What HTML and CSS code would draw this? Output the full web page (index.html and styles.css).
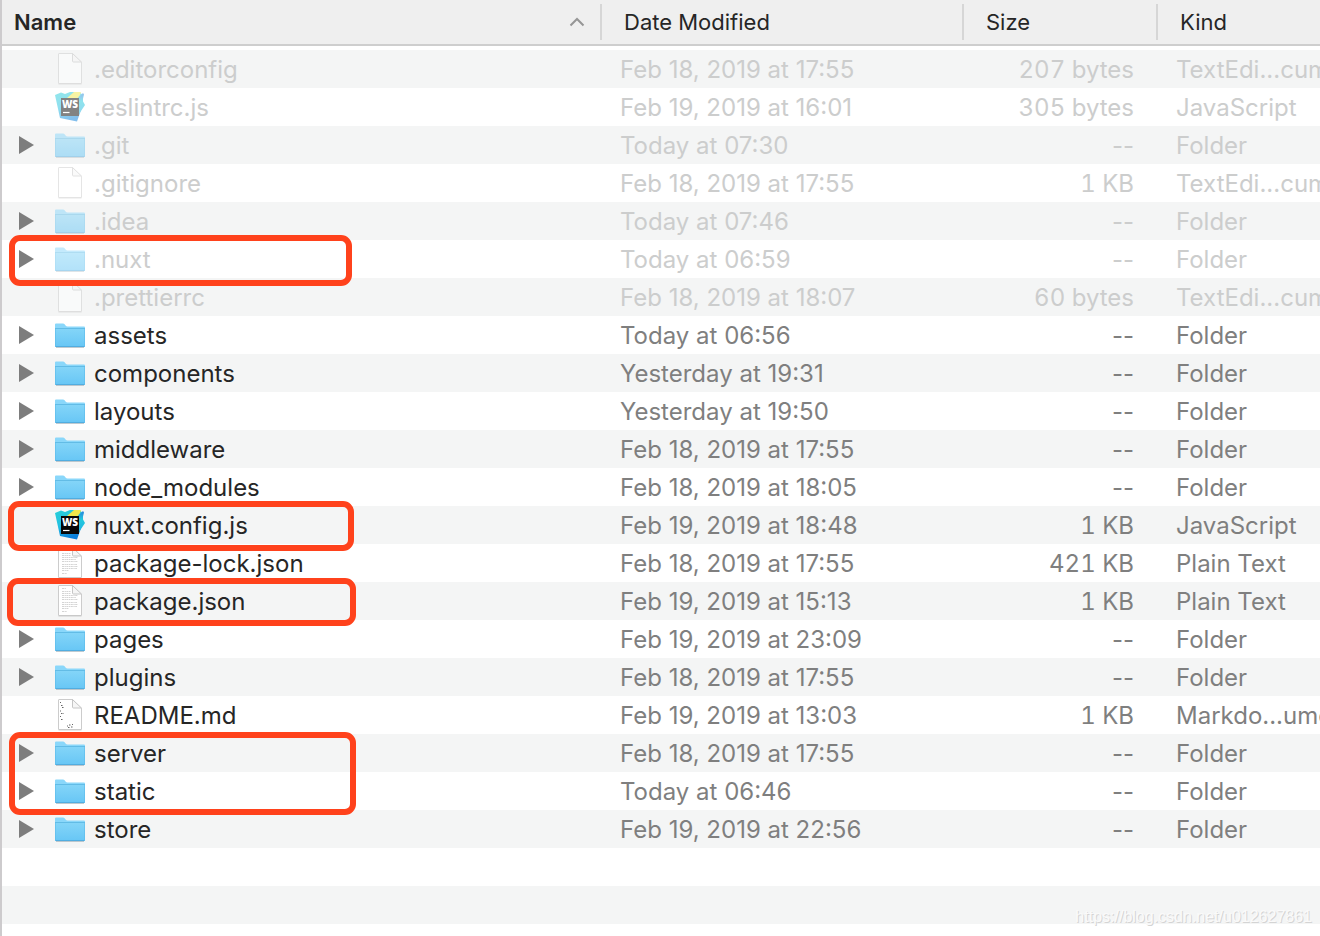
FILE: index.html
```
<!DOCTYPE html>
<html lang="en">
<head>
<meta charset="utf-8">
<title>Files</title>
<link rel="stylesheet" href="styles.css">
<script src="files.js" defer></script>
</head>
<body>
<svg class="defs" aria-hidden="true">
  <defs>
    <linearGradient id="folder-fill" x1="0" y1="0" x2="0" y2="1">
      <stop offset="0" stop-color="#84d5f8"/><stop offset="1" stop-color="#67c6f5"/>
    </linearGradient>
    <linearGradient id="ws-fill" x1="0" y1="0" x2="0.3" y2="1">
      <stop offset="0" stop-color="#27cfd8"/><stop offset="0.55" stop-color="#22c0e2"/><stop offset="1" stop-color="#0a80dc"/>
    </linearGradient>
    <linearGradient id="ws-side" x1="0" y1="0" x2="0" y2="1">
      <stop offset="0" stop-color="#2a7fdc"/><stop offset="0.4" stop-color="#22c8dc"/><stop offset="1" stop-color="#22b4e4"/>
    </linearGradient>
  </defs>
  <symbol id="folder" viewBox="0 0 30 38">
    <path d="M1 31.5h28" stroke="#a4b4bc" stroke-opacity=".7"/>
    <path d="M0 30V8.500Q0 7.500 1 7.500h7q1 0 1.600.8l1.200 1.400q.6.800 1.600.8H29q1 0 1 1V30q0 1-1 1H1q-1 0-1-1z" fill="#8ad7fa"/>
    <path d="M0 12.500h30V30q0 1-1 1H1q-1 0-1-1z" fill="url(#folder-fill)"/>
    <path d="M0 12.500h30" stroke="#62bce6"/>
    <path d="M.5 30.500h29" stroke="#51ade0"/>
    <path d="M.5 12v18M29.500 12v18" stroke="#5dbbe9" stroke-width=".6"/>
  </symbol>
  <symbol id="doc" viewBox="0 0 30 38">
    <path d="M3.500 33.800h23" stroke="#b4b4b4"/>
    <path d="M3.500 4q0-.5.5-.5h13.500l9 9V33q0 .5-.5.500H4q-.5 0-.5-.5z" fill="#fff" stroke="#c6c6c6" stroke-width=".9"/>
    <path d="M17.500 3.500v7.500q0 1 1 1h8z" fill="#f6f6f6" stroke="#c0c0c0" stroke-width=".9"/>
  </symbol>
  <symbol id="text" viewBox="0 0 30 38">
    <use href="#doc"/>
    <path d="M7 6.500h4M7 9.500h9M7 11.500h9M7 13.500h16M7 15.500h14M7 17.500h16M7 20.500h15M7 22.500h16M7 24.500h15M7 26.500h7M7 29.500h5" stroke="#999" stroke-width=".7" stroke-dasharray="2 .6 1.300 .5" opacity=".6"/>
  </symbol>
  <symbol id="markdown" viewBox="0 0 30 38">
    <use href="#doc"/>
    <path d="M5 6.500h1.500M6 9.500h2M7 11.500h2M5 15h1.500M6 17.500h2.500M5 20.500h1.500M6 23.500h2M12 30h1M14 29h2M17 28.500h1M13 31.500h2M16 31h2" stroke="#666" stroke-width="1.100" stroke-dasharray="1 .5"/>
  </symbol>
  <symbol id="webstorm" viewBox="0 0 30 38">
    <path d="M0 7 6 4.500l4 1.500 5-2h9l4 3v10l-3 8-3 8.500L5 30z" fill="url(#ws-fill)"/>
    <path d="M23 10l5-5 1 1.500-1.500 6L30 17l-4 6-2 3z" fill="url(#ws-side)"/>
    <path d="M12 10l7-6h7l-1 3-3 4z" fill="#f0e84a"/>
    <rect x="6" y="10" width="18" height="18" fill="#080808"/>
    <text class="ws-label" x="15" y="20" text-anchor="middle">WS</text>
    <path d="M8 24.500h6.500" stroke="#fff" stroke-width="1.200"/>
  </symbol>
</svg>
<main class="finder">
  <table class="files">
    <colgroup><col><col class="col-date"><col class="col-size"><col class="col-kind"></colgroup>
    <thead>
      <tr>
        <th scope="col" aria-sort="ascending"><button type="button" class="head head-name">Name
          <svg class="sort" viewBox="0 0 16 10" aria-hidden="true"><path d="M1.500 8.500 8 2l6.500 6.500"/></svg></button></th>
        <th scope="col"><button type="button" class="head">Date Modified</button></th>
        <th scope="col"><button type="button" class="head">Size</button></th>
        <th scope="col"><button type="button" class="head">Kind</button></th>
      </tr>
    </thead>
    <tbody id="rows"></tbody>
  </table>
  <p class="watermark">https://blog.csdn.net/u012627861</p>
</main>
</body>
</html>
```
FILE: styles.css
```
* {
  box-sizing: border-box;
}

body {
  margin: 0;
  background: #fff;
  color: #262626;
  font-family: Inter, "Liberation Sans", sans-serif;
}

.defs {
  position: absolute;
  width: 0;
  height: 0;
  visibility: hidden;
}

.finder {
  position: relative;
  min-height: 100vh;
  border-left: 2px solid #cdcbcd;
  overflow: hidden;
}

.files {
  width: 100%;
  table-layout: fixed;
  border-collapse: separate;
  border-spacing: 0;
}

.col-date { width: 362px; }
.col-size { width: 194px; }
.col-kind { width: 164px; }

th {
  height: 46px;
  padding: 1px 0;
  background: #efefef;
  border-bottom: 2px solid #cecece;
}

.head {
  display: flex;
  align-items: center;
  width: 100%;
  height: 36px;
  padding: 0 0 0 22px;
  border: 0;
  border-left: 2px solid #d6d6d6;
  background: none;
  color: inherit;
  font: 400 22px/36px Inter, "Liberation Sans", sans-serif;
  text-align: left;
}

.head-name {
  justify-content: space-between;
  padding: 0 15px 0 12px;
  border-left: 0;
  font-weight: 600;
}

.sort {
  width: 16px;
  height: 10px;
  fill: none;
  stroke: #969696;
  stroke-width: 2;
}

tbody::before {
  content: "";
  display: table-row;
  height: 4px;
}

td {
  height: 38px;
  padding: 2px 0 0;
  color: #7f7f7f;
  font-size: 24px;
  line-height: 36px;
  white-space: nowrap;
}

.stripe td {
  background: #f4f5f5;
}

.name {
  position: relative;
  padding: 0;
  color: #262626;
}

.date,
.kind {
  padding-left: 20px;
}

.kind {
  overflow: hidden;
}

.size {
  padding-right: 22px;
  text-align: right;
}

.amount {
  font-variant-numeric: tabular-nums;
}

.hidden-file td {
  color: #cccdcd;
}

.hidden-file .icon {
  opacity: 0.5;
}

.entry {
  display: grid;
  grid-template-columns: 27px 30px 1fr;
  column-gap: 9px;
  padding-left: 17px;
}

.toggle {
  grid-column: 1;
  width: 16px;
  height: 38px;
  padding: 0;
  border: 0;
  background: none;
}

.toggle svg {
  display: block;
  width: 16px;
  height: 38px;
  fill: #7d7d7d;
}

.icon {
  grid-column: 2;
  width: 30px;
  height: 38px;
}

.label {
  padding-top: 2px;
}

.ws-label {
  fill: #fff;
  font: 800 10px "Open Sans", sans-serif;
}

.mark {
  position: absolute;
  z-index: 1;
  border: 6px solid #ff421c;
  border-radius: 11px;
  pointer-events: none;
}

.mark-nuxt { inset: -5px auto -8px 7px; width: 343px; }
.mark-config { inset: -5px auto -7px 6px; width: 346px; }
.mark-package { inset: -4px auto -6px 5px; width: 349px; }
.mark-server { inset: -2px auto -43px 7px; width: 347px; }

.watermark {
  position: absolute;
  right: 8px;
  bottom: 9px;
  margin: 0;
  color: #fafafa;
  font: 16px/20px "Liberation Sans", Arial, sans-serif;
  text-shadow: 1px 1px 0 #d4d4d4;
}
```
FILE: files.js
```
const T = 'TextEdi...cument';
const files = [
  ['.editorconfig', 'doc', 'Feb 18, 2019 at 17:55', '207 bytes', T],
  ['.eslintrc.js', 'webstorm', 'Feb 19, 2019 at 16:01', '305 bytes', 'JavaScript'],
  ['.git', 'folder', 'Today at 07:30'],
  ['.gitignore', 'doc', 'Feb 18, 2019 at 17:55', '1 KB', T],
  ['.idea', 'folder', 'Today at 07:46'],
  ['.nuxt', 'folder', 'Today at 06:59', '--', 'Folder', 'nuxt'],
  ['.prettierrc', 'doc', 'Feb 18, 2019 at 18:07', '60 bytes', T],
  ['assets', 'folder', 'Today at 06:56'],
  ['components', 'folder', 'Yesterday at 19:31'],
  ['layouts', 'folder', 'Yesterday at 19:50'],
  ['middleware', 'folder', 'Feb 18, 2019 at 17:55'],
  ['node_modules', 'folder', 'Feb 18, 2019 at 18:05'],
  ['nuxt.config.js', 'webstorm', 'Feb 19, 2019 at 18:48', '1 KB', 'JavaScript', 'config'],
  ['package-lock.json', 'text', 'Feb 18, 2019 at 17:55', '421 KB', 'Plain Text'],
  ['package.json', 'text', 'Feb 19, 2019 at 15:13', '1 KB', 'Plain Text', 'package'],
  ['pages', 'folder', 'Feb 19, 2019 at 23:09'],
  ['plugins', 'folder', 'Feb 18, 2019 at 17:55'],
  ['README.md', 'markdown', 'Feb 19, 2019 at 13:03', '1 KB', 'Markdo...ument'],
  ['server', 'folder', 'Feb 18, 2019 at 17:55', '--', 'Folder', 'server'],
  ['static', 'folder', 'Today at 06:46'],
  ['store', 'folder', 'Feb 19, 2019 at 22:56'],
];

const row = ([name, icon, date, size = '--', kind = 'Folder', mark], i) => `
  <tr class="${i % 2 ? '' : 'stripe'} ${name.startsWith('.') ? 'hidden-file' : ''}">
    <td class="name"><div class="entry">
      ${icon === 'folder' ? `<button type="button" class="toggle" aria-label="Expand ${name}"><svg viewBox="0 0 16 38"><path d="M0 10v18l15-9z"/></svg></button>` : ''}
      <svg class="icon" aria-hidden="true"><use href="#${icon}"/></svg><span class="label">${name}</span>
    </div>${mark ? `<span class="mark mark-${mark}"></span>` : ''}</td>
    <td class="date">${date}</td><td class="size ${size === '--' ? '' : 'amount'}">${size}</td><td class="kind">${kind}</td>
  </tr>`;

// Two blank rows continue the striping below the last file.
const blank = (cls) => `<tr class="${cls}" aria-hidden="true"><td colspan="4"></td></tr>`;
document.getElementById('rows').innerHTML = files.map(row).join('') + blank('') + blank('stripe');
```
